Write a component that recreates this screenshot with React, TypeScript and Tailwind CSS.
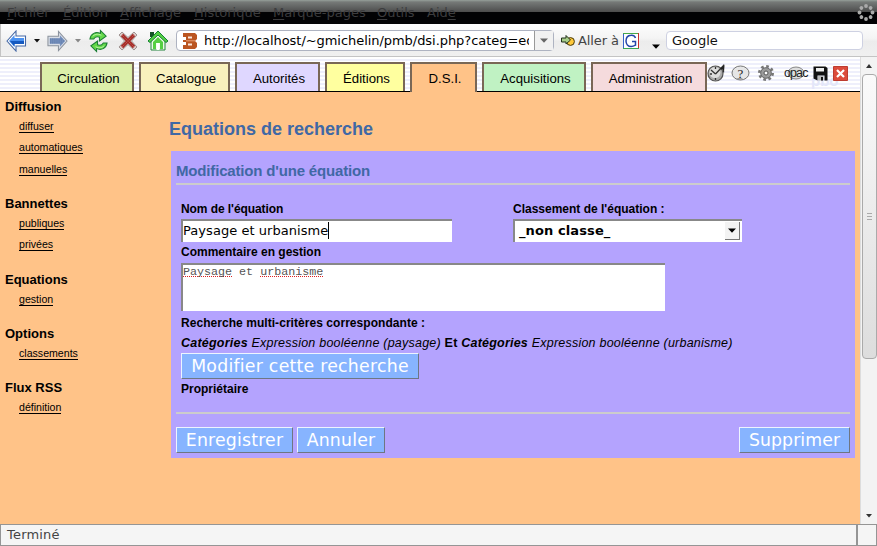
import type { ReactNode } from 'react';

const menus: [string, string, string, string][] = [
  ['', 'F', 'ichier', 'w-[56px]'],
  ['', 'É', 'dition', 'w-[57px]'],
  ['', 'A', 'ffichage', 'w-[74px]'],
  ['', 'H', 'istorique', 'w-[79px]'],
  ['', 'M', 'arque-pages', 'w-[104px]'],
  ['', 'O', 'utils', 'w-[50px]'],
  ['Aid', 'e', '', 'w-[40px]'],
];

const tabs = [
  { label: 'Circulation', look: 'w-[94px] bg-[#dcefa9]' },
  { label: 'Catalogue', look: 'w-[91px] bg-[#f9f1bd]' },
  { label: 'Autorités', look: 'w-[85px] bg-[#dfd7ff]' },
  { label: 'Éditions', look: 'w-[80px] bg-[#ffff9f]' },
  { label: 'D.S.I.', look: 'w-[67px] bg-[#ffc388]', active: true },
  { label: 'Acquisitions', look: 'w-[104px] bg-[#c0f2c3]' },
  { label: 'Administration', look: 'w-[116px] bg-[#f5dbdd]' },
];

const sections = [
  { title: 'Diffusion', links: ['diffuser', 'automatiques', 'manuelles'], h: 'h-[97px]' },
  { title: 'Bannettes', links: ['publiques', 'privées'], h: 'h-[76px]' },
  { title: 'Equations', links: ['gestion'], h: 'h-[54px]' },
  { title: 'Options', links: ['classements'], h: 'h-[54px]' },
  { title: 'Flux RSS', links: ['définition'], h: 'h-[54px]' },
];

function MenuBar() {
  return (
    <div className="flex h-6 shrink-0 items-start bg-[linear-gradient(#96a09a_0,#767a78_2px,#4c4c4c_12px,#020204_12px)] pl-[7px] font-['DejaVu_Sans',sans-serif] text-[13px] leading-[25px] text-[#3c3c3e]">
      {menus.map(([pre, key, post, w]) => (
        <span key={key} className={`${w} whitespace-nowrap`}>
          {pre}
          <u className="underline-offset-2">{key}</u>
          {post}
        </span>
      ))}
      <svg className="mt-1 ml-auto mr-[2px]" width="18" height="17" viewBox="-9 -8.5 18 17">
        {[0, 45, 90, 135, 180, 225, 270, 315].map((a) => (
          <circle key={a} cx="0" cy="-6.5" r="1.9" fill="#aaa" transform={`rotate(${a})`} />
        ))}
      </svg>
    </div>
  );
}

function Caret({ color = '#111', className = '' }: { color?: string; className?: string }) {
  return (
    <svg className={className} width="6" height="4" viewBox="0 0 6 4">
      <path d="M0 0h6L3 3.6z" fill={color} />
    </svg>
  );
}

function WideCaret({ color, className = '' }: { color: string; className?: string }) {
  return (
    <svg className={className} width="8" height="5" viewBox="0 0 8 5">
      <path d="M0 .5h8L4 4.800z" fill={color} />
    </svg>
  );
}

function Toolbar() {
  return (
    <div className="flex h-[33px] shrink-0 items-center border-b border-l border-[#c4c4c4] bg-[linear-gradient(#fdfdfd,#f4f4f4_45%,#ececec_55%,#f0f0f0)] pt-px font-['DejaVu_Sans',sans-serif] text-[13px]">
      <svg className="ml-[5px]" width="21" height="22" viewBox="0 0 21 22">
        <path d="M1 11 10 1v5h9.500v10H10v5z" fill="#fff" stroke="#4568a5" strokeWidth="1.1" />
        <path d="M3 11 8.500 5v3H18v6H8.500v3z" fill="#4a92f2" />
        <path d="M4 11h14v3H8.500v2.500z" fill="#1559bf" />
      </svg>
      <Caret color="#111" className="ml-[7px]" />
      <svg className="ml-[7px]" width="21" height="22" viewBox="0 0 22 22">
        <path d="M21 11 12 1v5H1v10h11v5z" fill="#d9dee6" stroke="#8b929d" strokeWidth="1.1" />
        <path d="M19 11 13.500 5v3H3v6h10.500v3z" fill="#7893c0" />
        <path d="M3 9h14M3 11h15M3 13h14" stroke="#526d9b" strokeDasharray="1 1" />
      </svg>
      <Caret color="#888" className="ml-[7px]" />
      <svg className="ml-[7px]" width="21" height="24" viewBox="0 0 22 24">
        <path d="M2 10C3 4 8 2 13 4V1l6 6-7 5V8C9 7 7 8 6 10z" fill="#63d949" stroke="#1b7e35" strokeWidth="1.1" />
        <path d="M20 14c-1 6-6 8-11 6v3l-6-6 7-5v4c3 1 5 0 6-2z" fill="#63d949" stroke="#1b7e35" strokeWidth="1.1" />
        <path d="M5 7c2-2 5-3 9-1M17 17c-2 2-5 3-9 1" stroke="#c3f6ae" fill="none" />
      </svg>
      <svg className="ml-[9px]" width="20" height="20" viewBox="0 0 20 20">
        <path d="M4 1 10 6.500 16 1l3 3-5.500 6L19 16l-3 3-6-5.500L4 19l-3-3 5.500-6L1 4z" fill="#ddcbc8" stroke="#a09492" />
        <path d="m4 4 12 12M16 4 4 16" stroke="#a52a25" strokeWidth="3.200" />
        <path d="m4 4 12 12M16 4 4 16" stroke="#c76660" strokeDasharray="1 1" />
      </svg>
      <svg className="ml-[9px]" width="22" height="21" viewBox="0 0 22 21">
        <path d="M3 2h4v5H3z" fill="#155227" />
        <path d="M4 10v10h14V10" fill="#eafbe6" stroke="#23833c" />
        <path d="M1 11 11 1l10 10-2 1.500L11 5l-8 7.500z" fill="#54cf42" stroke="#168035" />
        <path d="m6 12 5-5 5 5v7h-3v-6H9v6H6z" fill="#54cf42" />
        <path d="M9.500 13h3v7h-3z" fill="#fff" />
      </svg>
      <div className="ml-[7px] flex h-[21px] w-[378px] rounded-sm border border-[#aeb3c1] bg-white">
        <svg className="mt-[2px] ml-[5px] shrink-0" width="16" height="16" viewBox="0 0 16 16">
          <path d="M1 0h12l2 2v4l-2 2 2 2v4l-2 2H1v-4h3v-3H1V7h3V4H1z" fill="#bb5521" />
          <path d="M6 4.500h4M6 11.500h4" stroke="#fbe6da" strokeWidth="2" />
          <path d="M4 7.800h9" stroke="#e9a077" />
        </svg>
        <div className="ml-[6px] w-[325px] shrink-0 overflow-hidden whitespace-nowrap text-[13px] leading-5 tracking-[-0.05px] text-black">
          http://localhost/~gmichelin/pmb/dsi.php?categ=eq
        </div>
        <div className="ml-[5px] flex flex-1 items-center justify-center border-l border-[#999] bg-[#f1f1f1]">
          <WideCaret color="#666" />
        </div>
      </div>
      <svg className="ml-[7px]" width="14" height="14" viewBox="0 0 14 14">
        <circle cx="9.500" cy="7.500" r="3.900" fill="#ffc839" stroke="#42360c" />
        <path d="M.5 4H5V1.500L9.500 6 5 10V8H.5z" fill="#a6cc87" stroke="#20301a" />
      </svg>
      <span className="ml-[3px] w-[45px] whitespace-nowrap tracking-[-0.1px] text-[#444]">Aller à</span>
      <svg width="16" height="16" viewBox="0 0 16 16">
        <path d="M0 0h16v16H0z" fill="#fff" />
        <path d="M.5 16V.5" stroke="#3563c9" />
        <path d="M0 .5h16" stroke="#47a947" />
        <path d="M15.500 0v16" stroke="#c92f2f" />
        <path d="M0 15.500h16" stroke="#3aa652" />
        <path d="M12.500 5C11.500 2.500 9.500 2 8 2.200 4.500 2.400 3 5 3 8s2 5.500 5.200 5.500c1.500 0 3-.6 4.300-1.300V8.500H9" fill="none" stroke="#2445a8" strokeWidth="1.500" />
      </svg>
      <WideCaret color="#000" className="mt-[11px] ml-[13px]" />
      <div className="ml-[6px] h-[19px] w-[197px] rounded-sm border border-[#ced1e2] bg-white pl-[5px] leading-[18px] text-[#111]">Google</div>
    </div>
  );
}

function HeaderIcons() {
  return (
    <div className="flex h-[20px] items-center">
      <svg width="19" height="18" viewBox="0 0 19 18">
        <circle cx="8.500" cy="9.500" r="7.500" fill="#aaa" stroke="#555" strokeWidth="1.200" />
        <circle cx="8" cy="8.500" r="5.500" fill="#ddd" />
        <path d="m8.500 10 8-8.500v7M8.500 10 4 6M8.500 3v2M3 10h2M8.500 14v2" fill="none" stroke="#333" strokeWidth="1.300" />
        <path d="m13 5 4.500-4-.5 5z" fill="#222" />
      </svg>
      <svg className="ml-[5px]" width="19" height="16" viewBox="0 0 19 16">
        <ellipse cx="9.500" cy="8" rx="8.500" ry="7" fill="#e6e6e6" stroke="#777" />
        <path d="M5 13h7l-3 2z" fill="#999" />
        <text x="9.500" y="12.500" textAnchor="middle" fontSize="13" fontFamily="Liberation Serif, serif" fill="#222">?</text>
      </svg>
      <svg className="ml-[7px]" width="18" height="18" viewBox="0 0 18 18">
        <circle cx="9" cy="9" r="6.700" fill="none" stroke="#777" strokeWidth="2.600" strokeDasharray="2.700 2.560" />
        <circle cx="9" cy="9" r="5.300" fill="#9c9c9c" stroke="#666" />
        <circle cx="9" cy="9" r="2" fill="#fff" stroke="#555" />
      </svg>
      <svg className="ml-[9px] overflow-visible" width="24" height="18" viewBox="0 0 24 18">
        <ellipse cx="12" cy="9" rx="8" ry="6" fill="#ddd" stroke="#888" />
        <text x="0" y="12.500" fontSize="12.5" letterSpacing="-0.9" fontFamily="Liberation Sans, sans-serif" fill="#222">opac</text>
      </svg>
      <svg className="ml-[5px]" width="15" height="15" viewBox="0 0 15 15">
        <path d="M.5.500h12L14.500 2v12.500h-3V9.500h-7v5l-4-2z" fill="#111" />
        <path d="M3 2h8v3.500H3z" fill="#eee" />
        <path d="M5 10h5.500v4.500H5z" fill="#bbb" />
        <path d="M8 11h2v3.500H8z" fill="#111" />
      </svg>
      <svg className="ml-[5px]" width="15" height="15" viewBox="0 0 15 15">
        <path d="M.5.500h14v14H.5z" fill="#dc4b3c" stroke="#bd3b30" />
        <path d="m4 4 7 7M11 4l-7 7" stroke="#fff" strokeWidth="2.200" />
      </svg>
    </div>
  );
}

function Tabs() {
  return (
    <div className="relative flex h-[35px] shrink-0 items-end border-b border-black bg-[repeating-linear-gradient(#fff_0,#fff_2px,#eeeffb_2px,#eeeffb_4px)] pl-10">
      <span className="absolute top-[15px] left-[811px] text-[15px] leading-[18px] font-bold text-[#e3e6f9]">pbo</span>
      {tabs.map((t) => (
        <div
          key={t.label}
          className={`${t.look} ${t.active ? '-mb-px h-[30px]' : 'h-[29px]'} mr-[5px] shrink-0 whitespace-nowrap border-2 border-b-0 border-[#796756] pt-[6px] pl-[3px] text-center text-[13.2px] leading-[17px]`}
        >
          {t.label}
        </div>
      ))}
      <div className="absolute top-[6px] left-[707px]">
        <HeaderIcons />
      </div>
    </div>
  );
}

function Sidebar() {
  return (
    <nav className="w-[171px] shrink-0 pt-[7px] pl-[5px]">
      {sections.map((s) => (
        <section key={s.title} className={s.h}>
          <h3 className="h-[16px] text-[13px] leading-[16px] font-bold">{s.title}</h3>
          <ul className="pt-[6px] pl-[14px]">
            {s.links.map((l) => (
              <li key={l} className="flex h-[21px] text-[10.6px] leading-[11px] nth-3:pt-px">
                <a className="h-3 border-b border-black whitespace-nowrap">{l}</a>
              </li>
            ))}
          </ul>
        </section>
      ))}
    </nav>
  );
}

function Button({ children, className }: { children: ReactNode; className: string }) {
  return (
    <button
      className={`${className} h-[26px] shrink-0 border border-t-[#edf4ff] border-r-[#6e7683] border-b-[#6e7683] border-l-[#edf4ff] bg-[#87b4ff] text-center font-['DejaVu_Sans',sans-serif] text-[17.3px] leading-[24px] whitespace-nowrap text-white`}
    >
      {children}
    </button>
  );
}

const field = 'border-t-2 border-l-2 border-[#888] bg-white';
const label = 'text-[12px] font-bold whitespace-nowrap';
const squiggle = 'h-3 border-b border-dotted border-b-[#d22]';

function Form() {
  return (
    <form className="flex h-[307px] w-[684px] flex-col bg-[#b4a3fe] px-[5px]">
      <h2 className="h-8 pt-[11px] text-[15px] leading-[18px] font-bold tracking-[-0.17px] text-[#4068a5]">Modification d'une équation</h2>
      <hr className="h-[2px] border-0 bg-[#ccc]" />
      <div className="flex h-[57px] pt-[16px] pl-[5px]">
        <div className="w-[332px]">
          <div className={`${label} h-[18px] leading-[16px] tracking-[-0.07px]`}>Nom de l'équation</div>
          <div className={`${field} flex h-[23px] w-[271px] font-['DejaVu_Sans',sans-serif] text-[13px] leading-[20px] tracking-[0.05px]`}>
            Paysage et urbanisme
            <i className="mt-[1px] h-[17px] w-px bg-black" />
          </div>
        </div>
        <div>
          <div className={`${label} h-[18px] leading-[16px]`}>Classement de l'équation :</div>
          <div className={`${field} flex h-[23px] w-[229px] justify-between pl-[4px] font-['DejaVu_Sans',sans-serif] text-[13px] leading-[19px] font-bold tracking-[0.1px]`}>
            _non classe_
            <span className="mt-px mr-[2px] flex h-[18px] w-[15px] items-center justify-center border-r border-b border-[#777] bg-[#f3f3f3]">
              <WideCaret color="#000" />
            </span>
          </div>
        </div>
      </div>
      <div className="flex flex-col pl-[5px]">
        <div className={`${label} h-[21px] pt-[2px] leading-[16px]`}>Commentaire en gestion</div>
        <div className={`${field} flex h-[48px] w-[484px] gap-[7px] font-['Liberation_Mono',monospace] text-[11.7px] leading-[14px] text-[#555]`}>
          <span className={squiggle}>Paysage</span>
          <span>et</span>
          <span className={squiggle}>urbanisme</span>
        </div>
        <div className={`${label} h-[22px] pt-[4px] leading-[16px] tracking-[0.05px]`}>Recherche multi-critères correspondante :</div>
        <p className="h-[20px] text-[12.5px] leading-[20px] tracking-[0.22px] whitespace-nowrap">
          <em><b>Catégories</b> Expression booléenne (paysage)</em> <b>Et</b> <em><b>Catégories</b> Expression booléenne (urbanisme)</em>
        </p>
        <Button className="w-[238px] tracking-[0.26px]">Modifier cette recherche</Button>
        <div className={`${label} h-[33px] pt-[2px] leading-[16px]`}>Propriétaire</div>
      </div>
      <hr className="h-[2px] shrink-0 border-0 bg-[#ccc]" />
      <div className="flex gap-1 pt-[13px]">
        <Button className="w-[117px] tracking-[0.2px]">Enregistrer</Button>
        <Button className="w-[88px] tracking-[0.2px]">Annuler</Button>
        <Button className="ml-auto w-[111px] tracking-[0.1px]">Supprimer</Button>
      </div>
    </form>
  );
}

function Scrollbar() {
  return (
    <div className="flex w-[17px] shrink-0 flex-col items-center border-l border-[#ddd] bg-[#f3f3f3]">
      <div className="flex h-[17px] items-center">
        <svg width="6" height="4"><path d="M0 4h6L3 0z" fill="#333" /></svg>
      </div>
      <div className="flex h-[285px] w-[15px] flex-col items-center justify-center gap-[2px] rounded-sm border border-[#aaa] bg-[linear-gradient(#fafafa,#ddd)]">
        <i className="h-px w-[5px] bg-[#aaa]" />
        <i className="h-px w-[5px] bg-[#aaa]" />
        <i className="h-px w-[5px] bg-[#aaa]" />
      </div>
      <div className="mt-auto mb-[6px]"><Caret color="#333" className="block" /></div>
    </div>
  );
}

export default function App() {
  return (
    <div className="flex h-[546px] w-[877px] flex-col overflow-hidden bg-[#f5f5f5] font-['Liberation_Sans',Arial,sans-serif] text-black">
      <MenuBar />
      <Toolbar />
      <div className="flex min-h-0 flex-1">
        <div className="flex w-[860px] shrink-0 flex-col bg-[#ffc388]">
          <Tabs />
          <div className="flex flex-1">
            <Sidebar />
            <main>
              <h1 className="-ml-[2px] h-[59px] pt-[26px] text-[18px] leading-[22px] font-bold text-[#4068a5]">Equations de recherche</h1>
              <Form />
            </main>
          </div>
        </div>
        <Scrollbar />
      </div>
      <footer className="flex h-[22px] shrink-0 border border-[#959595] font-['DejaVu_Sans',sans-serif] text-[13px] leading-[20px] tracking-[0.2px] text-[#444]">
        <span className="flex-1 border-r-2 border-[#959595] pl-[6px]">Terminé</span>
        <span className="w-[18px]" />
      </footer>
    </div>
  );
}
